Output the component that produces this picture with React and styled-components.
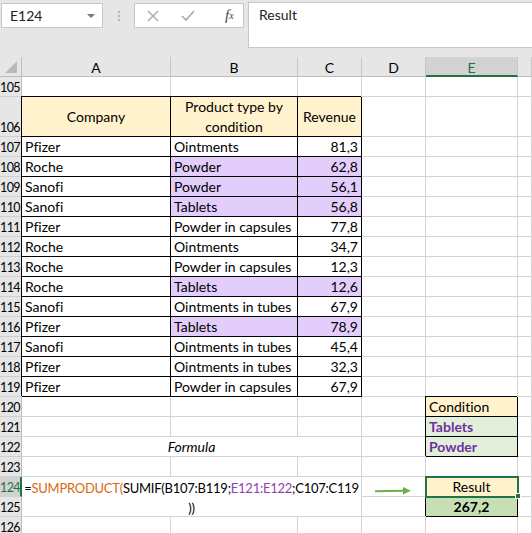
import React from "react";
import styled, { createGlobalStyle, css } from "styled-components";

const GlobalStyle = createGlobalStyle`
  html, body {
    margin: 0;
    padding: 0;
    background: #ffffff;
  }
  * {
    box-sizing: border-box;
  }
`;

const GREEN = "#217346";
const GRID = "#d4d4d4";

const Window = styled.div`
  width: 532px;
  height: 533px;
  overflow: hidden;
  background: #e6e6e6;
  font-family: Lato, "Liberation Sans", sans-serif;
  font-size: 14px;
  font-variant-ligatures: none;
  color: #000;
`;

const Toolbar = styled.div`
  height: 57px;
  display: flex;
  align-items: flex-start;
  padding: 3px 0 0 1px;
`;

const NameBox = styled.div`
  width: 102px;
  height: 25px;
  background: #fff;
  border: 1px solid #c8c8c8;
  display: flex;
  align-items: center;
  justify-content: space-between;
  padding: 0 7px 0 8px;
  font-size: 14px;
  color: #222;
`;

const Caret = styled.span`
  width: 0;
  height: 0;
  border-left: 4px solid transparent;
  border-right: 4px solid transparent;
  border-top: 4px solid #777;
`;

const Dots = styled.div`
  width: 31px;
  height: 25px;
  display: flex;
  flex-direction: column;
  align-items: center;
  justify-content: center;
  gap: 2px;
  span {
    width: 2px;
    height: 2px;
    background: #b4b4b4;
  }
`;

const FnBox = styled.div`
  width: 110px;
  height: 25px;
  background: #fff;
  border: 1px solid #c8c8c8;
  display: flex;
  align-items: center;
  padding-left: 12px;
  gap: 22px;
`;

const Fx = styled.span`
  font-family: "Liberation Serif", serif;
  font-style: italic;
  font-size: 15px;
  color: #444;
  margin-left: 8px;
  sub {
    font-size: 10px;
    vertical-align: 1px;
  }
`;

const FormulaInput = styled.div`
  flex: 1;
  margin-left: 4px;
  margin-top: -1px;
  height: 46px;
  background: #fff;
  border: 1px solid #c8c8c8;
  border-right: none;
  padding: 3px 0 0 10px;
  font-size: 14px;
  color: #222;
`;

const Sheet = styled.div`
  display: grid;
  grid-template-columns: 22px 149px 127px 64px 64px 92px 1fr;
  grid-template-rows: 20px 20px 40px repeat(20, 20px);
  background: #fff;
`;

const Corner = styled.div`
  background: #e6e6e6;
  border-right: 1px solid #bdbdbd;
  border-bottom: 1px solid #bdbdbd;
  display: flex;
  align-items: flex-end;
  justify-content: flex-end;
  padding: 0 4px 3px 0;
`;

const ColHead = styled.div`
  background: ${(p) => (p.$selected ? "#d2d2d2" : "#e6e6e6")};
  color: ${(p) => (p.$selected ? GREEN : "#000")};
  border-right: 1px solid #c6c6c6;
  border-bottom: ${(p) => (p.$selected ? `2px solid ${GREEN}` : "1px solid #bdbdbd")};
  display: flex;
  align-items: center;
  justify-content: center;
  padding-top: ${(p) => (p.$selected ? 2 : 1)}px;
`;

const RowHead = styled.div`
  background: ${(p) => (p.$selected ? "#d2d2d2" : "#e6e6e6")};
  color: ${(p) => (p.$selected ? GREEN : "#000")};
  border-right: ${(p) => (p.$selected ? `2px solid ${GREEN}` : "1px solid #bdbdbd")};
  border-bottom: 1px solid #cfcfcf;
  display: flex;
  align-items: flex-end;
  justify-content: flex-end;
  padding: 0 ${(p) => (p.$selected ? 0 : 1)}px 1px 0;
  font-size: 12.5px;
  letter-spacing: -0.6px;
`;

const Cell = styled.div`
  position: relative;
  border-right: 1px solid ${GRID};
  border-bottom: 1px solid ${GRID};
  background: ${(p) => p.$bg || "#fff"};
  color: ${(p) => p.$color || "#000"};
  font-weight: ${(p) => (p.$bold ? 700 : 400)};
  font-style: ${(p) => (p.$italic ? "italic" : "normal")};
  display: flex;
  align-items: center;
  justify-content: ${(p) =>
    p.$align === "right" ? "flex-end" : p.$align === "center" ? "center" : "flex-start"};
  text-align: ${(p) => p.$align || "left"};
  padding: 1px 3px 0 3px;
  white-space: nowrap;
  line-height: 20px;
  grid-column: ${(p) => (p.$cols ? `span ${p.$cols}` : "auto")};
  grid-row: ${(p) => (p.$rows ? `span ${p.$rows}` : "auto")};
  ${(p) =>
    p.$boxed &&
    css`
      border-right-color: #000;
      border-bottom-color: #000;
      box-shadow: -1px -1px 0 0 #000;
    `}
  ${(p) =>
    p.$active &&
    css`
      z-index: 2;
      outline: 2px solid ${GREEN};
      outline-offset: -1px;
    `}
`;

const Handle = styled.span`
  position: absolute;
  right: -4px;
  bottom: -3px;
  width: 6px;
  height: 6px;
  background: ${GREEN};
  border: 1px solid #fff;
`;

const FormulaText = styled(Cell)`
  flex-direction: column;
  align-items: center;
  justify-content: flex-start;
  padding: 1px 0 0 0;
  font-size: 13px;
  letter-spacing: -0.25px;
  span.fn {
    color: #d9670f;
  }
  span.ref {
    color: #8e3fb5;
  }
`;

const ArrowCell = styled(Cell)`
  align-items: flex-end;
  padding: 0 0 1px 13px;
`;

const tableRows = [
  [107, "Pfizer", "Ointments", "81,3", false],
  [108, "Roche", "Powder", "62,8", true],
  [109, "Sanofi", "Powder", "56,1", true],
  [110, "Sanofi", "Tablets", "56,8", true],
  [111, "Pfizer", "Powder in capsules", "77,8", false],
  [112, "Roche", "Ointments", "34,7", false],
  [113, "Roche", "Powder in capsules", "12,3", false],
  [114, "Roche", "Tablets", "12,6", true],
  [115, "Sanofi", "Ointments in tubes", "67,9", false],
  [116, "Pfizer", "Tablets", "78,9", true],
  [117, "Sanofi", "Ointments in tubes", "45,4", false],
  [118, "Pfizer", "Ointments in tubes", "32,3", false],
  [119, "Pfizer", "Powder in capsules", "67,9", false],
];

const GOLD = "#fff2cc";
const LILAC = "#e3cdfb";
const MINT = "#e2efda";
const SAGE = "#c6e0b4";
const PURPLE = "#7030a0";

const Empty = ({ n = 1 }) =>
  Array.from({ length: n }, (_, i) => <Cell key={i} />);

const XIcon = () => (
  <svg width="12" height="12" viewBox="0 0 12 12">
    <path d="M1 1 L11 11 M11 1 L1 11" stroke="#a8a8a8" strokeWidth="1.4" fill="none" />
  </svg>
);

const CheckIcon = () => (
  <svg width="14" height="11" viewBox="0 0 14 11">
    <path d="M1 6 L5 10 L13 1" stroke="#a8a8a8" strokeWidth="1.6" fill="none" />
  </svg>
);

const SelectAll = () => (
  <svg width="12" height="12" viewBox="0 0 12 12">
    <path d="M12 0 L12 12 L0 12 Z" fill="#b9b9b9" />
  </svg>
);

const Arrow = () => (
  <svg width="37" height="8" viewBox="0 0 37 8">
    <path d="M0 4.3 L29 3.8" stroke="#70ad47" strokeWidth="2" fill="none" />
    <path d="M28 0 L36 3.8 L28 7.6 Z" fill="#70ad47" />
  </svg>
);

export default function App() {
  return (
    <Window>
      <GlobalStyle />
      <Toolbar>
        <NameBox>
          E124
          <Caret />
        </NameBox>
        <Dots>
          <span />
          <span />
          <span />
        </Dots>
        <FnBox>
          <XIcon />
          <CheckIcon />
          <Fx>
            f<sub>x</sub>
          </Fx>
        </FnBox>
        <FormulaInput>Result</FormulaInput>
      </Toolbar>

      <Sheet>
        <Corner>
          <SelectAll />
        </Corner>
        <ColHead>A</ColHead>
        <ColHead>B</ColHead>
        <ColHead>C</ColHead>
        <ColHead>D</ColHead>
        <ColHead $selected>E</ColHead>
        <ColHead />

        <RowHead>105</RowHead>
        <Empty n={6} />

        <RowHead>106</RowHead>
        <Cell $boxed $bg={GOLD} $align="center">Company</Cell>
        <Cell $boxed $bg={GOLD} $align="center" style={{ whiteSpace: "normal" }}>
          Product type by
          <br />
          condition
        </Cell>
        <Cell $boxed $bg={GOLD} $align="center">Revenue</Cell>
        <Empty n={3} />

        {tableRows.map(([n, company, type, revenue, hit]) => (
          <React.Fragment key={n}>
            <RowHead>{n}</RowHead>
            <Cell $boxed>{company}</Cell>
            <Cell $boxed $bg={hit ? LILAC : undefined}>{type}</Cell>
            <Cell $boxed $bg={hit ? LILAC : undefined} $align="right">{revenue}</Cell>
            <Empty n={3} />
          </React.Fragment>
        ))}

        <RowHead>120</RowHead>
        <Empty n={4} />
        <Cell $boxed $bg={GOLD}>Condition</Cell>
        <Cell />

        <RowHead>121</RowHead>
        <Empty n={4} />
        <Cell $boxed $bg={MINT} $bold $color={PURPLE}>Tablets</Cell>
        <Cell />

        <RowHead>122</RowHead>
        <Cell $cols={3} $align="center" $italic>Formula</Cell>
        <Cell />
        <Cell $boxed $bg={MINT} $bold $color={PURPLE}>Powder</Cell>
        <Cell />

        <RowHead>123</RowHead>
        <Empty n={6} />

        <RowHead $selected>124</RowHead>
        <FormulaText $cols={3} $rows={2}>
          <div>
            =<span className="fn">SUMPRODUCT(</span>SUMIF(B107:B119;
            <span className="ref">E121:E122</span>;C107:C119
          </div>
          <div>))</div>
        </FormulaText>
        <ArrowCell>
          <Arrow />
        </ArrowCell>
        <Cell $active $bg={GOLD} $align="center">
          Result
          <Handle />
        </Cell>
        <Cell />

        <RowHead>125</RowHead>
        <Cell />
        <Cell $boxed $bg={SAGE} $bold $align="center">267,2</Cell>
        <Cell />

        <RowHead>126</RowHead>
        <Empty n={6} />
      </Sheet>
    </Window>
  );
}
